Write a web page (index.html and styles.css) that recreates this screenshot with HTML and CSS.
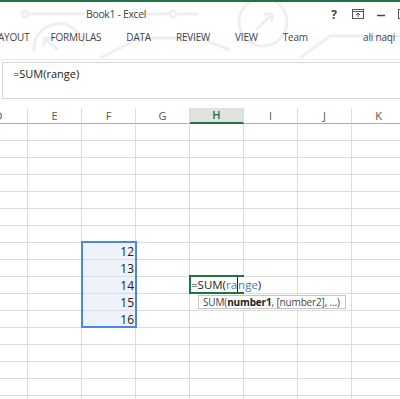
FILE: index.html
```html
<!DOCTYPE html>
<html lang="en">
<head>
    <meta charset="UTF-8">
    <title>Book1 - Excel</title>
    <link rel="stylesheet" href="styles.css">
</head>
<body>
    <div class="window">
        <div class="ribbon">
            <svg class="watermark" width="400" height="58" viewBox="0 0 400 58">
                <circle cx="25" cy="14" r="3" />
                <line x1="28" y1="14" x2="84" y2="14" />
                <line x1="146" y1="14" x2="170" y2="14" />
                <circle cx="173" cy="14" r="3" />
                <line x1="176" y1="14" x2="198" y2="14" />
                <path d="M34 52 A25 25 0 1 1 84 46" />
                <path d="M44 38 L58 50 M44 38 L44 46 M44 38 L52 38" />
                <circle cx="263" cy="22" r="24" />
                <path d="M256 30 L272 14 M272 14 L264 14 M272 14 L272 22" />
                <path d="M100 58 L140 38 L200 38 L230 50" />
                <path d="M300 58 L330 36 L400 36" />
            </svg>
            <div class="titlebar">
                <span class="title">Book1 - Excel</span>
                <div class="win-controls">
                    <span class="help">?</span>
                    <svg class="ctl" width="12" height="10" viewBox="0 0 12 10">
                        <rect x="0.5" y="0.5" width="11" height="9" fill="none" stroke="#555" />
                        <line x1="0" y1="2.5" x2="12" y2="2.5" stroke="#555" />
                        <path d="M6 4 L6 8 M4 6 L6 4 L8 6" fill="none" stroke="#555" />
                    </svg>
                    <svg class="ctl" width="10" height="10" viewBox="0 0 10 10">
                        <line x1="1" y1="6.5" x2="9" y2="6.5" stroke="#444" stroke-width="1.5" />
                    </svg>
                    <svg class="ctl" width="10" height="10" viewBox="0 0 10 10">
                        <rect x="0.5" y="0.5" width="9" height="9" fill="none" stroke="#555" />
                    </svg>
                </div>
            </div>
            <div class="tabs">
                <span class="tab cut">AYOUT</span>
                <span class="tab">FORMULAS</span>
                <span class="tab">DATA</span>
                <span class="tab">REVIEW</span>
                <span class="tab">VIEW</span>
                <span class="tab">Team</span>
                <span class="user">ali naqi</span>
            </div>
        </div>

        <div class="formula-bar">=SUM(range)</div>

        <div class="sheet">
            <div class="col-head">D</div>
            <div class="col-head">E</div>
            <div class="col-head">F</div>
            <div class="col-head">G</div>
            <div class="col-head active">H</div>
            <div class="col-head">I</div>
            <div class="col-head">J</div>
            <div class="col-head">K</div>

            <div class="body">
                <div class="selection">
                    <div class="num">12</div>
                    <div class="num">13</div>
                    <div class="num">14</div>
                    <div class="num">15</div>
                    <div class="num">16</div>
                </div>
                <div class="edit-cell">=SUM(<span class="ref">ra<i class="caret"></i>nge</span>)</div>
                <div class="tip">SUM(<b>number1</b>, [number2], ...)</div>
            </div>
        </div>
    </div>
</body>
</html>
```

FILE: styles.css
```css
body {
    margin: 0;
    font-family: 'Open Sans', 'Noto Sans', sans-serif;
    background: white;
    color: #444;
}

.window {
    width: 400px;
    height: 399px;
    overflow: hidden;
    border-top: 2px solid #217346;
    box-sizing: border-box;
}

.ribbon {
    position: relative;
    height: 57px;
    border-bottom: 1px solid #e8e8e8;
}

.watermark {
    position: absolute;
    top: -2px;
    left: 0;
    fill: none;
    stroke: #efefef;
    stroke-width: 3;
}

.titlebar {
    position: relative;
    height: 24px;
    display: flex;
    align-items: center;
}

.title {
    margin-left: 86px;
    font-size: 10.5px;
    letter-spacing: -0.35px;
    color: #444;
}

.win-controls {
    margin-left: auto;
    margin-right: -8px;
    display: flex;
    align-items: center;
    gap: 12px;
}

.help {
    font-size: 12px;
    font-weight: bold;
    color: #444;
    margin-right: 3px;
}

.tabs {
    position: relative;
    height: 22px;
    display: flex;
    align-items: center;
    font-size: 10px;
    letter-spacing: -0.2px;
    color: #444;
}

.tab {
    margin-right: 25px;
}

.tab.cut {
    margin-left: -2px;
    margin-right: 21px;
}

.user {
    margin-left: auto;
    margin-right: 5px;
}

.formula-bar {
    margin: 2px 0 0 2px;
    height: 37px;
    border: 1px solid #d6d6d6;
    border-right: none;
    padding: 3px 10px;
    box-sizing: border-box;
    font-size: 11px;
    color: #222;
}

.sheet {
    margin-top: 9px;
    display: grid;
    grid-template-columns: 28px repeat(7, 54px);
    grid-template-rows: 16px 1fr;
}

.col-head {
    height: 16px;
    box-sizing: border-box;
    border-right: 1px solid #dcdcdc;
    border-bottom: 1px solid #ababab;
    font-size: 11px;
    line-height: 15px;
    text-align: center;
    color: #555;
}

.col-head:first-child {
    text-indent: -30px;
}

.col-head.active {
    background: #e1e1e1;
    border-bottom: 2px solid #217346;
    color: #217346;
    font-weight: 600;
    line-height: 14px;
}

.body {
    grid-column: 1 / -1;
    position: relative;
    height: 290px;
    display: grid;
    grid-template-columns: 28px repeat(7, 54px);
    grid-template-rows: repeat(17, 17px);
    background-image:
        linear-gradient(to right, #dcdcdc 1px, transparent 1px),
        linear-gradient(to bottom, #dcdcdc 1px, transparent 1px);
    background-size: 54px 100%, 100% 17px;
    background-position: 27px 0, 0 16px;
}

.selection {
    grid-column: 3;
    grid-row: 8 / span 5;
    margin: -2px -1px 0 -1px;
    border: 2px solid #4c86e6;
    background: #edf2fb;
    display: flex;
    flex-direction: column;
}

.num {
    height: 17px;
    box-sizing: border-box;
    border-bottom: 1px solid #d8dde6;
    text-align: right;
    padding-right: 1px;
    font-size: 12px;
    line-height: 17px;
    color: #222;
}

.num:last-child {
    border-bottom: none;
}

.edit-cell {
    grid-column: 5;
    grid-row: 10;
    margin: -2px 0 0 -1px;
    border: 2px solid #217346;
    border-right: none;
    font-size: 11.5px;
    line-height: 15px;
    color: #222;
    white-space: nowrap;
    overflow: visible;
    background: white;
    position: relative;
}

.ref {
    color: #3f74d1;
}

.caret {
    display: inline-block;
    width: 1px;
    height: 15px;
    background: #222;
    vertical-align: top;
}

.tip {
    position: absolute;
    left: 198px;
    top: 171px;
    width: 148px;
    height: 14px;
    box-sizing: border-box;
    border: 1px solid #c6c6c6;
    background: white;
    font-size: 10px;
    letter-spacing: -0.15px;
    line-height: 12px;
    padding-left: 4px;
    color: #444;
    white-space: nowrap;
}

.tip b {
    color: #222;
}
```
